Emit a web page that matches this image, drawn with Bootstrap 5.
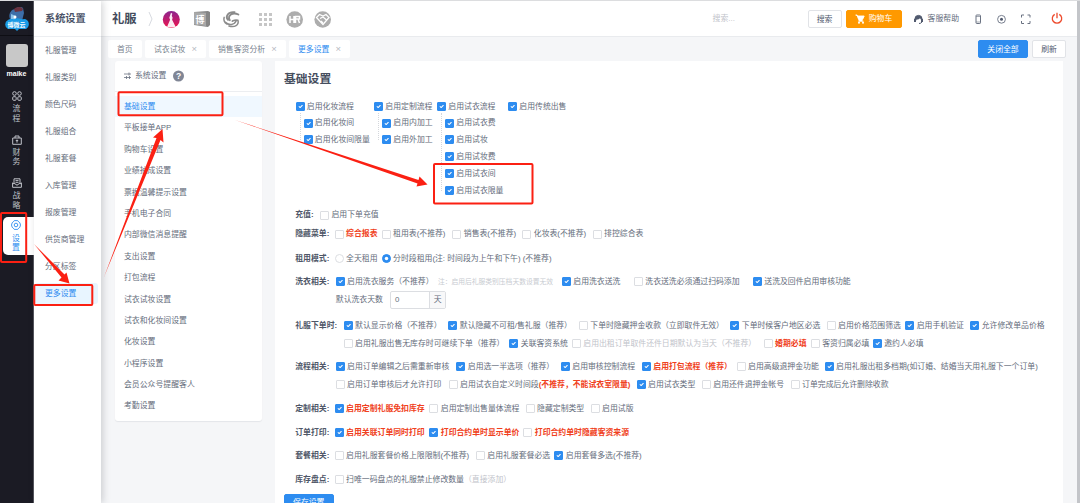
<!DOCTYPE html>
<html lang="zh-CN">
<head>
<meta charset="utf-8">
<title>系统设置</title>
<link href="https://cdn.jsdelivr.net/npm/bootstrap@5.3.0/dist/css/bootstrap.min.css" rel="stylesheet">
<script src="https://cdn.jsdelivr.net/npm/bootstrap@5.3.0/dist/js/bootstrap.bundle.min.js"></script>
<style>
body{height:503px;overflow:hidden;background:#f5f6f8;color:#646c7b;font:7.87px/1.5 "Liberation Sans","Noto Sans CJK SC",sans-serif;white-space:nowrap}
svg{display:block;flex:none}
.app{height:503px;border-top:1px solid #dcdddf;position:relative}
.rail{width:34px;background:#1b1b24;color:#bfc1c8;border-right:1px solid #55565e}
.rail .logo{height:35px;border-bottom:1px solid #0e0e14;width:100%;padding:5px 0 0 3px}
.avatar{width:22px;height:23px;border-radius:3px;background:#c8c8c8;margin:8px 0 0;flex:none}
.user{font-weight:700;font-size:7px;line-height:12px;color:#fff;margin:1px 0 11px}
.rail-item{height:43.5px;width:100%;line-height:9.8px;flex:none}
.rail-item svg{margin-bottom:3px}
.rail-item.on{background:#fff;color:#2d8cf0;margin:-5px 0 0 3px;width:31px;height:38px;border-radius:5px 0 0 5px;padding:3px 5px 0 0;align-self:flex-start}
.rail-item.on svg{margin-bottom:4px}
.sub{width:67px;background:#fff;z-index:2;box-shadow:2px 0 7px rgba(60,65,75,.22);flex:none}
.sub h1{font-size:10.2px;font-weight:700;color:#4b5368;height:36px;line-height:35px;padding-left:11px;margin:0 0 3px;border-bottom:1px solid #eceef1}
.sub a{display:block;height:21px;line-height:21px;margin:0 3px 6px 1px;padding-left:10px;color:#515a6e;text-decoration:none;border-radius:3px}
.sub a.on{background:#e8f5ff;color:#2d8cf0}
.head{height:36px;background:#fff;border-bottom:1px solid #e9ebee;width:976px}
.brand{font-size:12.3px;font-weight:700;color:#434b5c;width:38px;margin-left:11px;padding-top:1px}
.hbtn{height:18px;line-height:17px;border:1px solid #e1e3e7;border-radius:2px;background:#fff;color:#515a6e;font-size:7.87px;padding:0;text-align:center}
.hbtn.orange{background:#ff9900;border-color:#ff9900;color:#fff}
.hbtn.blue{background:#2d8cf0;border-color:#2d8cf0;color:#fff}
.tabs{height:18px;margin:3px 0 3px 7px;gap:3px;width:958px}
.tabs>span{height:18px;line-height:19px;background:#fff;border-radius:2px;padding-left:9px;color:#777f8d}
.tabs i{font:9.5px/1 "Liberation Sans",sans-serif;color:#b5b8bf;margin-left:6px}
.tabs .hbtn:last-child{width:34px;margin-left:1px}
.side{width:147px;height:360px;background:#fff;border-radius:3px;box-shadow:0 1px 1px #e4e6e9;margin-left:14px;flex:none}
.side .top{height:31px;border-bottom:1px solid #eceef1;padding:0 9px 1px;margin-bottom:4px}
.side a{display:block;height:21.4px;line-height:22px;padding-left:9px;color:#5a6272;text-decoration:none}
.side a.on{color:#2d8cf0;background:#f0f8ff}
.panel{width:788px;background:#fff;margin-left:13px;height:442px;padding:0 0 0 9px;overflow:hidden;flex:none}
.panel h2{font-size:11.8px;font-weight:700;color:#464e5e;line-height:20px;margin:8px 0 8.8px}
.tree{margin-left:11.5px;height:101px;margin-bottom:7.3px}
.tree .opt{height:16.85px}
.tree .kids{padding-left:8px;position:relative}
.tree .kids::before{content:"";position:absolute;left:4px;top:-2px;bottom:8px;border-left:1px dotted #d4d7dc}
.t1{width:78.5px}
.t2{width:63px}
.t3{width:71px}
.opt{display:flex;align-items:center;gap:2.3px;padding-top:.6px}
.form-check-input{width:9px;height:9px;margin:0;border:1px solid #dcdee2;flex:none;position:relative;top:-.3px}
.form-check-input[type=checkbox]{border-radius:1px}
.form-check-input:checked{background-color:#2d8cf0;border-color:#2d8cf0}
.ln{display:grid;height:18px;align-items:center;margin-left:11.2px}
.ln b{color:#4f5768;padding-top:.6px}
.red{color:#f04020;font-weight:700}
.pale{color:#bfc3ca}
.note{font-size:6.77px;color:#c8cbd1}
.a1{grid-template-columns:25px auto;margin-bottom:1px}
.a2{grid-template-columns:39.6px 47px 70.7px 70px 70.3px auto;margin-bottom:6.3px}
.a3{grid-template-columns:39.6px 47px auto;margin-bottom:5.5px}
.a4{grid-template-columns:40.6px 102.2px 124px 72px 119px auto}
.a5{grid-template-columns:40.6px 54.2px auto;margin-bottom:7px;height:18.5px}
.a6{grid-template-columns:48.6px 104.7px 130.5px 151.5px 96.3px 78.7px 65px auto}
.a7{grid-template-columns:48.6px 165.7px 62.5px 191.8px 47.2px 62px auto;margin-bottom:5.6px}
.a8{grid-template-columns:40.6px 120.7px 104.5px 81px 94.8px 88px auto}
.a9{grid-template-columns:40.6px 113px 188px 65.2px 88.8px auto;margin-bottom:5.6px}
.a10{grid-template-columns:39.6px 94.7px 96.3px 65px auto;margin-bottom:5.7px}
.a11{grid-template-columns:39.6px 94.7px 94px auto;margin-bottom:5.7px}
.a12{grid-template-columns:39.6px 141.2px 78.5px auto;margin-bottom:5.7px}
.a13{grid-template-columns:39.6px auto;margin-bottom:5px}
.days{width:56.5px;height:17.5px;border:1px solid #dcdee2;border-radius:2px;overflow:hidden;line-height:16.5px}
.days span:last-child{width:16.5px;background:#f8f8f9;border-left:1px solid #dcdee2;text-align:center}
.save{width:49.5px;height:18px;border-radius:2px;line-height:15px}
.bar{width:3px;background:#c3c5c9;right:0;top:0;bottom:0;z-index:3}
.marks{left:0;top:-1px;z-index:5;pointer-events:none}
.seek{width:95px}
.b-find{width:34px}
.b-cart{width:56px;margin-left:4px}
.b-all{width:50px}
.head-icons{margin-left:-4px}
</style>
</head>
<body>
<div class="app d-flex">
<nav class="rail d-flex flex-column align-items-center flex-shrink-0">
  <div class="logo"><svg width="28" height="26" viewBox="0 0 28 26"><path d="M7 13C5 8 8 3 13 3c0-2 5-3 7-1l1 5-2 8-8 1z" fill="#3d6ea8"/><path d="M11 3c2-2 7-3 9 0l-1 2-7 1z" fill="#6b3340"/><path d="M8 8l5 2v4H8z" fill="#8bc3ea"/><circle cx="12" cy="11" r="1.5" fill="#fff"/><path d="M5 23a5 5 0 0 1 0-9c3-2 5 0 7-1 3-2 6 1 9 0 5 0 7 7 2 10h-7l-2 2-2-2z" fill="#1a9be6"/><text x="13.5" y="20.8" font-size="6" font-weight="700" fill="#fff" text-anchor="middle">博微云</text></svg></div>
  <div class="avatar"></div><div class="user">maike</div>
  <div class="rail-item d-flex flex-column align-items-center"><svg width="10" height="10" viewBox="0 0 10 10" fill="none" stroke="currentColor"><circle cx="2.5" cy="2.5" r="1.8"/><circle cx="7.5" cy="2.5" r="1.8"/><rect x=".7" y="5.7" width="3.5" height="3.6" rx="1"/><rect x="5.8" y="5.7" width="3.5" height="3.6" rx="1"/></svg><span>流</span><span>程</span></div>
  <div class="rail-item d-flex flex-column align-items-center"><svg width="10" height="10" viewBox="0 0 10 10" fill="none" stroke="currentColor"><path d="M.7 3h8.6v6.3H.7zM3 3V1h4v2M5 4.6v3M3.8 5.6h2.4"/></svg><span>财</span><span>务</span></div>
  <div class="rail-item d-flex flex-column align-items-center"><svg width="10" height="10" viewBox="0 0 10 10" fill="none" stroke="currentColor"><path d="M2 5V.8h6V5M.6 4.6v4.7h8.8V4.6M.6 5.6h2.6l.8 1.3h2l.8-1.3h2.6M3.5 2.6h3M3.5 4.3h3"/></svg><span>战</span><span>略</span></div>
  <div class="rail-item on d-flex flex-column align-items-center"><svg width="10" height="10" viewBox="0 0 10 10" fill="none" stroke="currentColor" stroke-width=".9"><path d="M3.3.6h3.4l1 1.3 1.1.8.7 2.3-.7 2.3-1.1.8-1 1.3H3.3l-1-1.3-1.1-.8L.5 5l.7-2.3 1.1-.8z"/><circle cx="5" cy="5" r="1.8"/></svg><span>设</span><span>置</span></div>
</nav>
<nav class="sub">
  <h1>系统设置</h1>
  <div><a>礼服管理</a><a>礼服类别</a><a>颜色尺码</a><a>礼服组合</a><a>礼服套餐</a><a>入库管理</a><a>报废管理</a><a>供货商管理</a><a>分区标签</a><a class="on">更多设置</a></div>
</nav>
<main class="flex-grow-1">
  <header class="head d-flex align-items-center">
    <span class="brand">礼服</span>
    <svg class="head-icons" width="195" height="20" viewBox="0 0 195 20">
      <path d="M3 3l3 7-3 7" fill="none" stroke="#d7dae0"/>
      <defs><linearGradient id="rose" x2="0" y2="1"><stop stop-color="#8a258f"/><stop offset="1" stop-color="#f0134d"/></linearGradient></defs>
      <circle cx="25.300" cy="10.500" r="8.500" fill="url(#rose)"/><path d="M25 3.700l1.300 1-.5 2 .8 2-.5 2 3.500 7q-4.500 1.500-8.500 0l3-7-.8-2z" fill="#fff" opacity=".92"/>
      <path d="M48 3l14-1 2 1v13l-2 2-14-2z" fill="#858585"/><path d="M48 3l12 .8V17l-12-1.500z" fill="#a8a8a8"/><text x="54" y="13.600" font-size="9" font-weight="700" fill="#fff" text-anchor="middle">博</text>
      <g fill="none" stroke="#8b8b8b" stroke-linecap="round" transform="translate(5 .8) scale(.95)"><path d="M88 2.500c-7-1-10 5-7 8M92 5c-6-3-12 1-9 6" stroke-width="1.900"/><path d="M82 17c6 2 11-1 9.500-6-3-1-4 0-6 1M78 13c4 4 10 3 12-2M77 8c-1 3 0 5 3 7" stroke-width="1.600"/></g>
      <path d="M113 4h3v3h-3zm5 0h3v3h-3zm5 0h3v3h-3zM113 9h3v3h-3zm5 0h3v3h-3zm5 0h3v3h-3zM113 14h3v3h-3zm5 0h3v3h-3zm5 0h3v3h-3z" fill="#c6c6c6"/>
      <circle cx="148.700" cy="10.500" r="8.300" fill="#adadad"/><path d="M144 7v7m4-7v7m-4-3.500h4m1.500 3.500V7.500h4V10h-4m2.500 0l1.500 4" fill="none" stroke="#fff" stroke-width="1.500"/>
      <circle cx="176.700" cy="10.500" r="8.300" fill="#adadad"/><path d="M170.500 8.500l3-3 3.500 1.500L180 5.500l3 3-6 7z" fill="none" stroke="#fff" stroke-width="1.300"/><path d="M174 9.500l3-1.500 3.500 3M175 12l2 2" fill="none" stroke="#fff" stroke-width="1.200"/>
    </svg>
    <div class="d-flex align-items-center ms-auto">
      <span class="pale seek">搜索...</span>
      <button class="hbtn b-find">搜索</button>
      <button class="hbtn orange b-cart d-flex align-items-center justify-content-center gap-1"><svg width="10" height="10" viewBox="0 0 10 10"><path d="M.5 1h1.600l1.500 4.500h4L9.200 2H2.500l2 4L3.600 7.200H8.500" fill="#fff" stroke="#fff" stroke-width=".9"/><circle cx="4" cy="8.800" r="1" fill="#fff"/><circle cx="8" cy="8.800" r="1" fill="#fff"/></svg>购物车</button>
      <svg class="me-1" width="22" height="10" viewBox="0 0 22 10"><g transform="translate(12 .5)"><path d="M.9 6V4.500a3.600 3.600 0 0 1 7.200 0V6" fill="#515a6e" stroke="#515a6e"/><path d="M2.300 5.300q3-.2 3.700-1.500l1 1.500v2q-2 2-4.700 0z" fill="#fff"/><path d="M0 4.500h2v3H0zm7 0h2v3H7z" fill="#515a6e"/><path d="M8 7.500q-1 1.500-3 1.500" fill="none" stroke="#515a6e"/></g></svg><span>客服帮助</span>
      <svg width="118" height="16" viewBox="0 0 118 16" fill="none" stroke="#6a7282"><rect x="17" y="4" width="4.500" height="8.500" rx=".7"/><path d="M17 5.500h4M17 11h4" stroke-width=".6"/><circle cx="42.500" cy="8.300" r="3.900" stroke-width=".9"/><circle cx="42.500" cy="8.300" r="1.500" fill="#515a6e" stroke="none"/><path d="M62.500 6.500V4H65m3.500 0H71v2.500M71 10v2.500h-2.500m-3.500 0h-2.500V10"/><path d="M95.700 3.400a4.700 4.700 0 1 0 4.600 0M98 1.800v5.500" stroke="#ed4a2c" stroke-width="1.300"/></svg>
    </div>
  </header>
  <div class="tabs d-flex">
    <span style="width:34px">首页</span><span style="width:61px">试衣试妆<i>×</i></span><span style="width:77px">销售客资分析<i>×</i></span><span style="width:61px;color:#2d8cf0">更多设置<i>×</i></span>
    <button class="hbtn blue b-all ms-auto">关闭全部</button><button class="hbtn">刷新</button>
  </div>
  <div class="d-flex">
    <aside class="side">
      <div class="top d-flex align-items-center"><svg width="11" height="8" viewBox="0 0 11 8" fill="none" stroke="#6a7282" stroke-width=".8"><path d="M0 2h7M0 5.500h7M5 .5v3M2.500 4v3M5.500 4v3"/></svg><span>系统设置</span><svg width="19" height="12" viewBox="0 0 19 12"><circle cx="12.500" cy="6" r="5.500" fill="#808695"/><text x="12.500" y="9" font-size="8.500" font-weight="700" fill="#fff" text-anchor="middle">?</text></svg></div>
      <a class="on">基础设置</a><a>平板接单APP</a><a>购物车设置</a><a>业绩抽成设置</a><a>票据温馨提示设置</a><a>手机电子合同</a><a>内部微信消息提醒</a><a>支出设置</a><a>打包流程</a><a>试衣试妆设置</a><a>试衣和化妆间设置</a><a>化妆设置</a><a>小程序设置</a><a>会员公众号提醒客人</a><a>考勤设置</a>
    </aside>
    <section class="panel">
      <h2>基础设置</h2>
      <div class="tree d-flex">
        <div class="t1"><label class="opt"><input class="form-check-input" type="checkbox" checked>启用化妆流程</label><div class="kids"><label class="opt"><input class="form-check-input" type="checkbox" checked>启用化妆间</label><label class="opt"><input class="form-check-input" type="checkbox" checked>启用化妆间限量</label></div></div>
        <div class="t2"><label class="opt"><input class="form-check-input" type="checkbox" checked>启用定制流程</label><div class="kids"><label class="opt"><input class="form-check-input" type="checkbox" checked>启用内加工</label><label class="opt"><input class="form-check-input" type="checkbox" checked>启用外加工</label></div></div>
        <div class="t3"><label class="opt"><input class="form-check-input" type="checkbox" checked>启用试衣流程</label><div class="kids"><label class="opt"><input class="form-check-input" type="checkbox" checked>启用试衣费</label><label class="opt"><input class="form-check-input" type="checkbox" checked>启用试妆</label><label class="opt"><input class="form-check-input" type="checkbox" checked>启用试妆费</label><label class="opt"><input class="form-check-input" type="checkbox" checked>启用试衣间</label><label class="opt"><input class="form-check-input" type="checkbox" checked>启用试衣限量</label></div></div>
        <div><label class="opt"><input class="form-check-input" type="checkbox" checked>启用传统出售</label></div>
      </div>
      <div class="ln a1"><b>充值:</b><label class="opt"><input class="form-check-input" type="checkbox">启用下单充值</label></div>
      <div class="ln a2"><b>隐藏菜单:</b><label class="opt red"><input class="form-check-input" type="checkbox">综合报表</label><label class="opt"><input class="form-check-input" type="checkbox">租用表(不推荐)</label><label class="opt"><input class="form-check-input" type="checkbox">销售表(不推荐)</label><label class="opt"><input class="form-check-input" type="checkbox">化妆表(不推荐)</label><label class="opt"><input class="form-check-input" type="checkbox">排控综合表</label></div>
      <div class="ln a3"><b>租用模式:</b><label class="opt"><input class="form-check-input" type="radio" name="mode">全天租用</label><label class="opt"><input class="form-check-input" type="radio" name="mode" checked>分时段租用(注: 时间段为上午和下午) (不推荐)</label></div>
      <div class="ln a4"><b>洗衣相关:</b><label class="opt"><input class="form-check-input" type="checkbox" checked>启用洗衣服务（不推荐）</label><span class="note">注：启用后礼服类别压档天数设置无效</span><label class="opt"><input class="form-check-input" type="checkbox" checked>启用洗衣送洗</label><label class="opt"><input class="form-check-input" type="checkbox">洗衣送洗必须通过扫码添加</label><label class="opt"><input class="form-check-input" type="checkbox" checked>送洗及回件启用审核功能</label></div>
      <div class="ln a5"><i></i><span>默认洗衣天数</span><div class="days d-flex"><span class="flex-grow-1 ps-1">0</span><span>天</span></div></div>
      <div class="ln a6"><b>礼服下单时:</b><label class="opt"><input class="form-check-input" type="checkbox" checked>默认显示价格（不推荐）</label><label class="opt"><input class="form-check-input" type="checkbox" checked>默认隐藏不可租/售礼服（推荐）</label><label class="opt"><input class="form-check-input" type="checkbox">下单时隐藏押金收款（立即取件无效）</label><label class="opt"><input class="form-check-input" type="checkbox" checked>下单时候客户地区必选</label><label class="opt"><input class="form-check-input" type="checkbox">启用价格范围筛选</label><label class="opt"><input class="form-check-input" type="checkbox" checked>启用手机验证</label><label class="opt"><input class="form-check-input" type="checkbox" checked>允许修改单品价格</label></div>
      <div class="ln a7"><i></i><label class="opt"><input class="form-check-input" type="checkbox">启用礼服出售无库存时可继续下单（推荐）</label><label class="opt"><input class="form-check-input" type="checkbox" checked>关联客资系统</label><label class="opt pale"><input class="form-check-input" type="checkbox">启用出租订单取件还件日期默认为当天（不推荐）</label><label class="opt red"><input class="form-check-input" type="checkbox">婚期必填</label><label class="opt"><input class="form-check-input" type="checkbox">客资归属必填</label><label class="opt"><input class="form-check-input" type="checkbox" checked>邀约人必填</label></div>
      <div class="ln a8"><b>流程相关:</b><label class="opt"><input class="form-check-input" type="checkbox" checked>启用订单编辑之后需重新审核</label><label class="opt"><input class="form-check-input" type="checkbox" checked>启用选一半选项（推荐）</label><label class="opt"><input class="form-check-input" type="checkbox" checked>启用审核控制流程</label><label class="opt red"><input class="form-check-input" type="checkbox" checked>启用打包流程（推荐）</label><label class="opt"><input class="form-check-input" type="checkbox">启用高级退押金功能</label><label class="opt"><input class="form-check-input" type="checkbox" checked>启用礼服出租多档期(如订婚、结婚当天用礼服下一个订单)</label></div>
      <div class="ln a9"><i></i><label class="opt"><input class="form-check-input" type="checkbox">启用订单审核后才允许打印</label><label class="opt"><input class="form-check-input" type="checkbox"><span>启用试衣自定义时间段<span class="red">(不推荐，不能试衣室限量)</span></span></label><label class="opt"><input class="form-check-input" type="checkbox" checked>启用试衣类型</label><label class="opt"><input class="form-check-input" type="checkbox">启用还件退押金帐号</label><label class="opt"><input class="form-check-input" type="checkbox">订单完成后允许删除收款</label></div>
      <div class="ln a10"><b>定制相关:</b><label class="opt red"><input class="form-check-input" type="checkbox" checked>启用定制礼服免扣库存</label><label class="opt"><input class="form-check-input" type="checkbox">启用定制出售量体流程</label><label class="opt"><input class="form-check-input" type="checkbox">隐藏定制类型</label><label class="opt"><input class="form-check-input" type="checkbox">启用试版</label></div>
      <div class="ln a11"><b>订单打印:</b><label class="opt red"><input class="form-check-input" type="checkbox" checked>启用关联订单同时打印</label><label class="opt red"><input class="form-check-input" type="checkbox" checked>打印合约单时显示单价</label><label class="opt red"><input class="form-check-input" type="checkbox">打印合约单时隐藏客资来源</label></div>
      <div class="ln a12"><b>套餐相关:</b><label class="opt"><input class="form-check-input" type="checkbox">启用礼服套餐价格上限限制(不推荐)</label><label class="opt"><input class="form-check-input" type="checkbox">启用礼服套餐必选</label><label class="opt"><input class="form-check-input" type="checkbox" checked>启用套餐多选(不推荐)</label></div>
      <div class="ln a13"><b>库存盘点:</b><label class="opt"><input class="form-check-input" type="checkbox"><span>扫唯一码盘点的礼服禁止修改数量<span class="pale">（直接添加）</span></span></label></div>
      <button class="hbtn blue save">保存设置</button>
    </section>
  </div>
</main>
<div class="bar position-absolute"></div>
<svg class="marks position-absolute" width="1080" height="503" viewBox="0 0 1080 503">
  <g fill="none" stroke="#fb2013" stroke-width="2"><rect x="118.500" y="92.300" width="104" height="23" rx="1"/><rect x="1" y="213" width="25.200" height="49" rx="1"/><rect x="34.300" y="285" width="58" height="20" rx="1"/><rect x="434" y="164" width="98.500" height="39.500" rx="1"/></g>
  <g fill="#fb2013"><path d="M34 244L64.500 274.500 66.500 272.500 69.500 283.500 58.500 280.500 61.500 277.500z"/><path d="M104 277L156.500 138 153 137.500 162.500 129 163.500 142.500 160.500 140z"/><path d="M235 120L418.500 180 419.500 176.500 427.500 184.500 416.500 186.500 417.500 183.500z"/></g>
</svg>
</div>
</body>
</html>
